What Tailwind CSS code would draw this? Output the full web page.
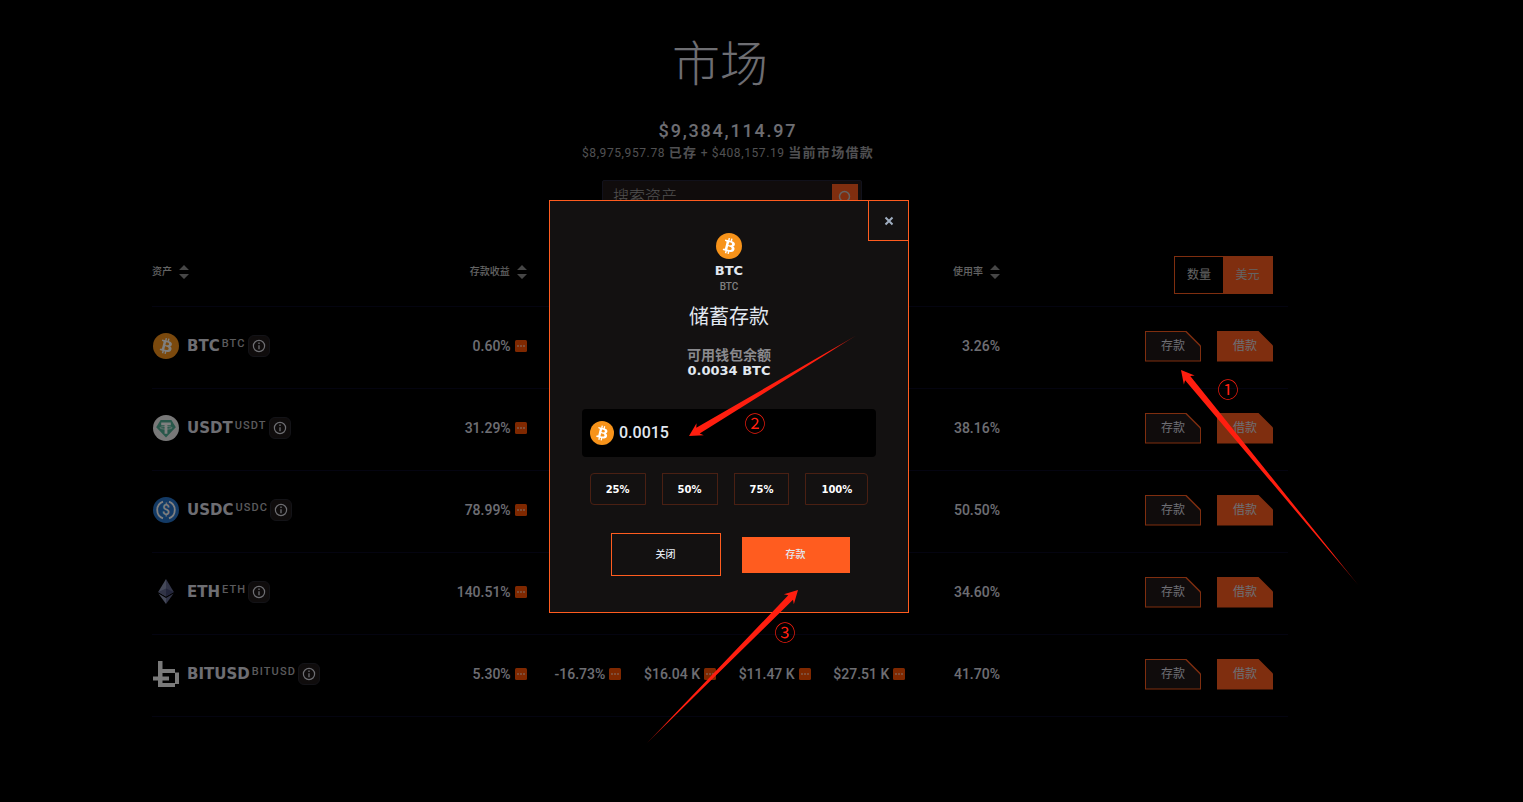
<!DOCTYPE html>
<html lang="zh-CN">
<head>
    <meta charset="UTF-8">
    <meta name="viewport" content="width=device-width, initial-scale=1.0">
    <title>市场</title>
    <script src="https://cdn.jsdelivr.net/npm/@tailwindcss/browser@4"></script>
</head>
<body class="min-h-screen overflow-x-hidden bg-black font-['Roboto','Noto_Sans_CJK_SC',sans-serif] text-[#dcdce4]">

<!-- Shared icons -->
<svg class="hidden" aria-hidden="true">
    <symbol id="btc" viewBox="0 0 32 32">
        <circle cx="16" cy="16" r="16" fill="#f7931a"/>
        <path fill="#fff" d="M23.189 14.02c.314-2.096-1.283-3.223-3.465-3.975l.708-2.84-1.728-.43-.69 2.765c-.454-.114-.92-.22-1.385-.326l.695-2.783L15.596 6l-.708 2.839c-.376-.086-.746-.17-1.104-.26l.002-.009-2.384-.595-.46 1.846s1.283.294 1.256.312c.7.175.826.638.805 1.006l-.806 3.235c.048.012.11.03.18.057l-.183-.045-1.13 4.532c-.086.212-.303.531-.793.41.018.025-1.256-.313-1.256-.313l-.858 1.978 2.25.561c.418.105.828.215 1.231.318l-.715 2.872 1.727.43.708-2.84c.472.127.93.245 1.378.357l-.706 2.828 1.728.43.715-2.866c2.948.558 5.164.333 6.097-2.333.752-2.146-.037-3.385-1.588-4.192 1.13-.26 1.98-1.003 2.207-2.538zm-3.95 5.538c-.533 2.147-4.148.986-5.32.695l.95-3.805c1.172.293 4.929.872 4.37 3.11zm.535-5.569c-.487 1.953-3.495.96-4.47.717l.86-3.45c.975.243 4.118.696 3.61 2.733z"/>
    </symbol>
    <symbol id="usdt" viewBox="0 0 26 26">
        <circle cx="13" cy="13" r="13" fill="#f0f0f0"/>
        <path fill="#50af95" d="M7.6 5h10.8l4.4 7.2L13 22.4 3.2 12.2z"/>
        <path fill="#fff" d="M8.2 7.6h9.6v2.6h-3.4v8.6h-2.8v-8.6H8.2z"/>
        <ellipse cx="13" cy="12.8" rx="6" ry="1.3" fill="none" stroke="#fff" stroke-width=".7"/>
    </symbol>
    <symbol id="usdc" viewBox="0 0 26 26">
        <circle cx="13" cy="13" r="13" fill="#2775ca"/>
        <path fill="none" stroke="#fff" stroke-width="1.8" d="M10 4.6a9 9 0 0 0 0 16.8M16 4.6a9 9 0 0 1 0 16.8"/>
        <text x="13" y="18" text-anchor="middle" font-family="Roboto, sans-serif" font-size="14" font-weight="500" fill="#fff">$</text>
    </symbol>
    <symbol id="eth" viewBox="0 0 26 26">
        <path fill="#8a92b2" d="M13 0v17.4L5.2 13z"/>
        <path fill="#62688f" d="M13 0v17.4l7.8-4.4z"/>
        <path fill="#62688f" d="M13 9.5v7.9L5.2 13z"/>
        <path fill="#454a75" d="M13 9.5v7.9l7.8-4.4z"/>
        <path fill="#8a92b2" d="M13 19v6L5.4 14.6z"/>
        <path fill="#62688f" d="M13 19v6l7.6-10.4z"/>
    </symbol>
    <symbol id="bitusd" viewBox="0 0 26 26">
        <path fill="#f5f5f5" d="M5 0h4.500v8H22v4H9.500v3.500H16v4H9.500V22H22v4H5v-6.500H0v-4h5zM22 11.500h4V23h-4z"/>
    </symbol>
    <symbol id="info" viewBox="0 0 14 14">
        <circle cx="7" cy="7" r="5.600" fill="none" stroke="currentColor" stroke-width="1.200"/>
        <path fill="none" stroke="currentColor" stroke-width="1.300" d="M7 6.300v4M7 3.600v1.400"/>
    </symbol>
    <symbol id="sort" viewBox="0 0 10 14">
        <path fill="currentColor" d="M5 0l5 5H0zM5 14l5-5H0z"/>
    </symbol>
    <symbol id="more" viewBox="0 0 12 12">
        <rect width="12" height="12" rx="1.500" fill="#ff5000"/>
        <path fill="#ff9c70" d="M2 5h2v2H2zM5 5h2v2H5zM8 5h2v2H8z"/>
    </symbol>
</svg>

<main class="pt-[41px] pr-[235px] pl-[152px]">
    <h1 class="text-center text-5xl leading-[48px] font-light">市场</h1>

    <div class="mt-[30px] pl-4 text-center">
        <p class="text-lg leading-6 font-medium tracking-widest">$9,384,114.97</p>
        <p class="text-xs leading-5 tracking-wider text-[#a0a0a4]">$8,975,957.78 <span class="text-[13px] font-bold tracking-widest">已存</span> + $408,157.19 <span class="text-[13px] font-bold tracking-widest">当前市场借款</span></p>
    </div>

    <form class="mt-[17px] flex justify-center pl-6">
        <div class="flex h-[34px] w-[260px] items-center rounded-xs border border-[#232336] bg-[#201919] pr-[3px] pl-[10px]">
            <input type="search" aria-label="搜索资产" placeholder="搜索资产" class="min-w-0 flex-1 bg-transparent text-base font-light outline-none placeholder:text-[#a0a0a0]">
            <button type="button" aria-label="搜索" class="flex size-[26px] items-center justify-center bg-[#ff5c1f]">
                <svg class="size-3.5 text-[#c8c8c8]" viewBox="0 0 14 14" fill="none" stroke="currentColor" stroke-width="1.500"><circle cx="6.500" cy="6.500" r="5"/><path d="M10.200 10.200L13.500 13.500"/></svg>
            </button>
        </div>
    </form>

    <table class="mt-[30px] w-full table-fixed">
        <colgroup>
            <col class="w-3/12">
            <col class="w-1/12">
            <col class="w-1/12">
            <col class="w-1/12">
            <col class="w-1/12">
            <col class="w-1/12">
            <col class="w-1/12">
            <col class="w-3/12">
        </colgroup>
        <thead>
            <tr class="h-[62px] border-b border-[#080820] text-[10px] text-[#c8c8c8]">
                <th class="pb-1.5 font-medium">
                    <button type="button" class="flex items-center gap-[7px]">资产 <svg class="h-3.5 w-2.5 text-[#8c8c8c]"><use href="#sort"/></svg></button>
                </th>
                <th class="pr-1 pb-1.5 font-medium">
                    <button type="button" class="ml-auto flex items-center gap-[7px]">存款收益 <svg class="h-3.5 w-2.5 text-[#8c8c8c]"><use href="#sort"/></svg></button>
                </th>
                <td></td>
                <td></td>
                <td></td>
                <td></td>
                <th class="pr-1 pb-1.5 font-medium">
                    <button type="button" class="ml-auto flex items-center gap-[7px]">使用率 <svg class="h-3.5 w-2.5 text-[#8c8c8c]"><use href="#sort"/></svg></button>
                </th>
                <td class="pr-[15px]">
                    <div class="ml-auto flex h-[38px] w-[99px] border border-[#ff5c1f] text-xs">
                        <button type="button" class="w-12">数量</button>
                        <button type="button" class="flex-1 bg-[#ff5c1f]">美元</button>
                    </div>
                </td>
            </tr>
        </thead>
        <tbody id="markets" class="text-sm font-medium"></tbody>
    </table>
</main>

<!-- One market row -->
<template id="row">
    <tr class="h-[82px] border-b border-[#080820]">
        <td class="pb-0.5">
            <div class="flex items-center">
                <svg class="mr-2 ml-px size-[26px]"><use data-coin/></svg>
                <span data-name class="mr-0.5 font-['DejaVu_Sans',sans-serif] text-[15px] leading-5 font-bold"></span>
                <span data-ticker class="mr-0.5 pb-1 text-[11px] leading-4 tracking-widest text-[#b4b4b8]"></span>
                <button type="button" aria-label="详情" class="flex size-[22px] items-center justify-center rounded-md border border-[#26262e] bg-[#1e1818]">
                    <svg class="size-3.5"><use href="#info"/></svg>
                </button>
            </div>
        </td>
        <td data-value class="pr-1 pb-0.5"></td>
        <td data-value class="pr-1 pb-0.5"></td>
        <td data-value class="pr-1 pb-0.5"></td>
        <td data-value class="pr-1 pb-0.5"></td>
        <td data-value class="pr-1 pb-0.5"></td>
        <td data-usage class="pr-1 pb-0.5 text-right"></td>
        <td class="pr-[15px] pb-0.5">
            <div class="flex justify-end gap-4 text-xs font-normal">
                <button type="button" class="h-[31px] w-14 bg-[#ff5c1f] p-px [clip-path:polygon(0_0,41px_0,100%_15px,100%_100%,0_100%)]">
                    <span class="flex h-full items-center justify-center bg-[#201919] [clip-path:polygon(0_0,39px_0,100%_15px,100%_100%,0_100%)]">存款</span>
                </button>
                <button type="button" class="h-[31px] w-14 bg-[#ff5c1f] [clip-path:polygon(0_0,41px_0,100%_15px,100%_100%,0_100%)]">借款</button>
            </div>
        </td>
    </tr>
</template>

<template id="value">
    <div class="flex items-center justify-end gap-1 whitespace-nowrap"><span></span><svg class="size-3"><use href="#more"/></svg></div>
</template>

<!-- Deposit dialog -->
<div class="fixed inset-0 flex items-start justify-center bg-black/50 pt-[200px] pr-[65px]">
    <div role="dialog" aria-labelledby="dialogTitle" class="relative flex w-[360px] flex-col items-center border border-[#ff5c1f] bg-[#131111] px-8 pt-8 pb-9 text-[#e2e8f0]">
        <button type="button" aria-label="关闭" class="absolute top-0 right-0 flex size-10 items-center justify-center border-b border-l border-[#ff5c1f] text-[#a0aec0]">
            <svg class="size-2.5" viewBox="0 0 10 10" fill="none" stroke="currentColor" stroke-width="2"><path d="M1.500 1.500l7 7M8.500 1.500l-7 7"/></svg>
        </button>
        <svg class="size-[26px]"><use href="#btc"/></svg>
        <p class="mt-1 font-['DejaVu_Sans',sans-serif] text-[13px] leading-4 font-bold">BTC</p>
        <p class="text-[10px] leading-4 font-medium text-[#808080]">BTC</p>
        <h2 id="dialogTitle" class="mt-2 text-xl leading-7">储蓄存款</h2>
        <p class="mt-4 text-sm leading-4 font-bold text-[#8a8a8e]">可用钱包余额</p>
        <p class="font-['DejaVu_Sans',sans-serif] text-[13px] leading-4 font-bold">0.0034 BTC</p>

        <label class="mt-[30px] flex h-12 w-full items-center gap-[5px] rounded bg-black px-2">
            <svg class="size-6"><use href="#btc"/></svg>
            <input type="text" aria-label="存款数量" value="0.0015" class="min-w-0 flex-1 bg-transparent text-base font-medium outline-none">
        </label>

        <div class="mt-4 flex gap-4 font-['DejaVu_Sans',sans-serif] text-[10px] font-bold text-white">
            <button type="button" class="h-8 rounded-l border border-[#4a2013] px-[15px]">25%</button>
            <button type="button" class="h-8 border border-[#4a2013] px-[15px]">50%</button>
            <button type="button" class="h-8 border border-[#4a2013] px-[15px]">75%</button>
            <button type="button" class="h-8 rounded-r border border-[#4a2013] px-[15px]">100%</button>
        </div>

        <div class="mt-7 flex items-center gap-[21px] pl-0.5 text-[10px] font-medium">
            <button type="button" class="h-[43px] w-[110px] border border-[#ff5c1f]">关闭</button>
            <button type="button" class="h-9 w-[108px] bg-[#ff5c1f]">存款</button>
        </div>
    </div>
</div>

<!-- Step markers -->
<svg class="pointer-events-none fixed top-0 left-0 h-full w-full" fill="#ff1e0f">
    <defs>
        <linearGradient id="fade"><stop offset=".85" stop-color="#ff1e0f"/><stop offset="1" stop-color="#ff1e0f" stop-opacity=".4"/></linearGradient>
    </defs>
    <g fill="url(#fade)">
        <path transform="translate(1181 370) rotate(50.500)" d="M0 0L13-7L10.500-3.300L279 0L10.500 3.300L13 7z"/>
        <path transform="translate(689 436) rotate(-31)" d="M0 0L13-7L10.500-3.300L195 0L10.500 3.300L13 7z"/>
        <path transform="translate(798 590) rotate(134.600)" d="M0 0L13-7L10.500-3.300L216 0L10.500 3.300L13 7z"/>
    </g>
    <g font-size="21" text-anchor="middle" font-family="Noto Sans CJK SC, sans-serif">
        <text x="1228" y="397">①</text>
        <text x="755" y="431">②</text>
        <text x="785" y="640">③</text>
    </g>
</svg>

<script>
const markets = [
    { coin: 'btc', name: 'BTC', values: ['0.60%'], usage: '3.26%' },
    { coin: 'usdt', name: 'USDT', values: ['31.29%'], usage: '38.16%' },
    { coin: 'usdc', name: 'USDC', values: ['78.99%'], usage: '50.50%' },
    { coin: 'eth', name: 'ETH', values: ['140.51%'], usage: '34.60%' },
    { coin: 'bitusd', name: 'BITUSD', values: ['5.30%', '-16.73%', '$16.04 K', '$11.47 K', '$27.51 K'], usage: '41.70%' }
];

const rowTemplate = document.getElementById('row');
const valueTemplate = document.getElementById('value');

markets.forEach(function(market) {
    const row = rowTemplate.content.cloneNode(true);
    row.querySelector('[data-coin]').setAttribute('href', '#' + market.coin);
    row.querySelector('[data-name]').textContent = market.name;
    row.querySelector('[data-ticker]').textContent = market.name;
    row.querySelector('[data-usage]').textContent = market.usage;

    const cells = row.querySelectorAll('[data-value]');
    market.values.forEach(function(text, i) {
        const value = valueTemplate.content.cloneNode(true);
        value.querySelector('span').textContent = text;
        cells[i].appendChild(value);
    });
    document.getElementById('markets').appendChild(row);
});
</script>

</body>
</html>
